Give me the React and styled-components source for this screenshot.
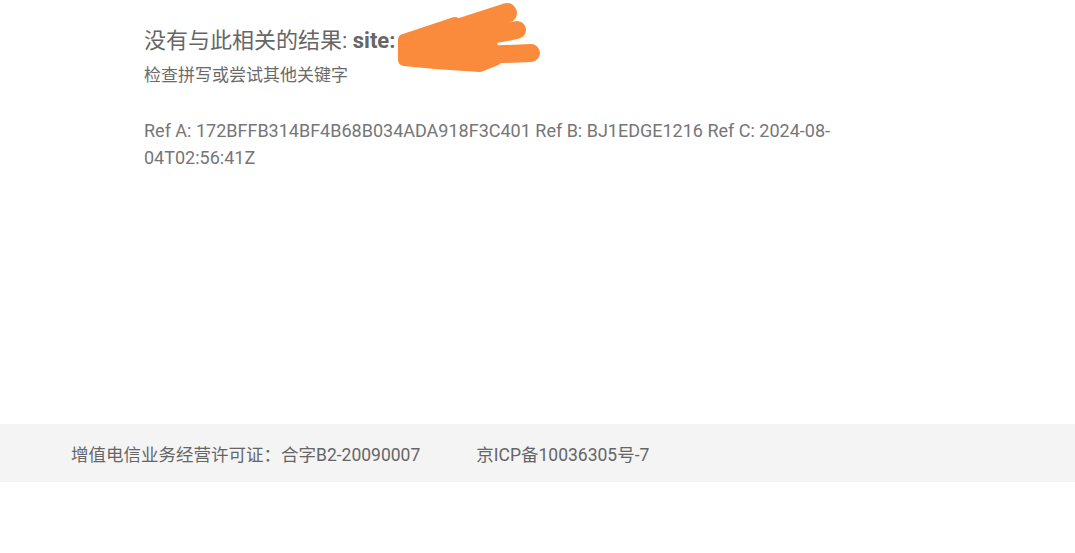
import React from 'react';
import styled, { createGlobalStyle } from 'styled-components';

const GlobalStyle = createGlobalStyle`
  body {
    margin: 0;
    background: #ffffff;
    font-family: Roboto, "Noto Sans CJK SC", sans-serif;
  }
`;

const Page = styled.div`
  display: flex;
  flex-direction: column;
  width: 1075px;
  min-height: 553px;
`;

const Main = styled.main`
  height: 424px;
  box-sizing: border-box;
  padding: 27px 0 0 144px;
`;

const Results = styled.div`
  position: relative;
  width: 700px;
`;

const Heading = styled.h1`
  margin: 0;
  font-size: 22px;
  line-height: 28px;
  font-weight: 400;
  color: #666666;
`;

const Query = styled.strong`
  font-weight: 700;
  color: #666666;
`;

const Hint = styled.p`
  margin: 10px 0 0;
  font-size: 17px;
  line-height: 20px;
  color: #6a6a6a;
`;

const RefText = styled.p`
  margin: 32px 0 0;
  font-size: 18px;
  line-height: 27px;
  color: #767676;
  word-break: break-word;
`;

const Scribble = styled.svg`
  position: absolute;
  left: 251px;
  top: -27px;
  width: 155px;
  height: 80px;
`;

const Footer = styled.footer`
  display: flex;
  align-items: center;
  gap: 56px;
  height: 58px;
  padding-left: 71px;
  background: #f4f4f4;
`;

const FooterItem = styled.span`
  font-size: 17.5px;
  color: #666666;
`;

const App = () => {
  return (
    <Page>
      <GlobalStyle />
      <Main>
        <Results>
          <Heading>
            没有与此相关的结果: <Query>site:</Query>
          </Heading>
          <Scribble viewBox="0 0 155 80">
            <g stroke="#fb8b3c" strokeLinecap="round" strokeLinejoin="round" fill="none">
              <path d="M16 44 L112 13" strokeWidth="20" />
              <path d="M70 40 L122 30" strokeWidth="18" />
              <path d="M60 56 L136 53" strokeWidth="18" />
              <path
                d="M9 40 L60 23 L95 38 L100 60 L85 66 L40 63 L9 60 Z"
                strokeWidth="12"
                fill="#fb8b3c"
              />
            </g>
          </Scribble>
          <Hint>检查拼写或尝试其他关键字</Hint>
          <RefText>
            Ref A: 172BFFB314BF4B68B034ADA918F3C401 Ref B: BJ1EDGE1216 Ref C: 2024-08-04T02:56:41Z
          </RefText>
        </Results>
      </Main>
      <Footer>
        <FooterItem>增值电信业务经营许可证：合字B2-20090007</FooterItem>
        <FooterItem>京ICP备10036305号-7</FooterItem>
      </Footer>
    </Page>
  );
};

export default App;
